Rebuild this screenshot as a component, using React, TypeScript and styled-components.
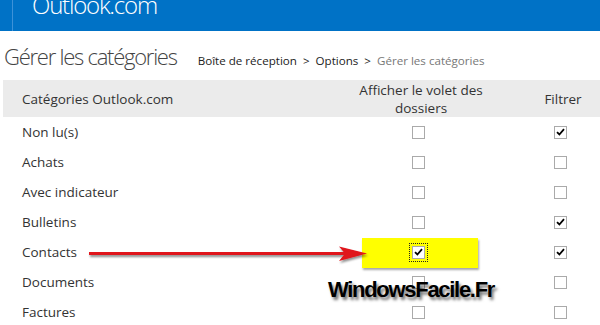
import React from "react"
import styled, { createGlobalStyle } from "styled-components"

const GlobalStyle = createGlobalStyle`
  html, body {
    margin:0;
    padding:0;
    background:#fff;
    overflow:hidden;
  }
  body {
    font-family: "Segoe UI", "Open Sans", "Noto Sans", sans-serif;
    color:#333;
  }
`

const Page = styled.div`
  position:relative;
  width:600px;
  height:325px;
  overflow:hidden;
`

const TopBar = styled.div`
  height:31px;
  background:#0072c6;
  display:flex;
  padding-left:12px;
  overflow:hidden;
`

const Divider = styled.div`
  width:1px;
  background:#3d92d8;
`

const Brand = styled.div`
  margin-left:19px;
  margin-top:-7px;
  font-size:24px;
  line-height:24px;
  font-weight:300;
  letter-spacing:-1.2px;
  color:#fff;
`

const TitleRow = styled.div`
  height:49px;
  display:flex;
  align-items:baseline;
  padding:0 4px;
`

const Title = styled.h1`
  margin:0;
  margin-top:10px;
  font-size:22px;
  line-height:30px;
  font-weight:300;
  letter-spacing:-1.25px;
  color:#444;
`

const Crumbs = styled.div`
  margin-left:21px;
  font-size:11.6px;
  color:#222;
  display:flex;
  gap:6px;
  white-space:nowrap;
`

const Crumb = styled.span<{ $current?: boolean }>`
  color:${({ $current }) => ($current ? "#777" : "#222")};
`

const Table = styled.div`
  margin-left:3px;
  width:642px;
`

const Row = styled.div`
  display:grid;
  grid-template-columns: 358px 120px 164px;
  align-items:center;
  height:30px;
  font-size:13.5px;
  color:#333;
`

const HeadRow = styled(Row)`
  height:37px;
  background-color:#ebebeb;
`

const NameCell = styled.div`
  padding-left:19px;
  white-space:nowrap;
`

const CenterCell = styled.div`
  display:flex;
  justify-content:center;
  text-align:center;
  line-height:18px;
  white-space:nowrap;
`

const Box = styled.span<{ $focus?: boolean }>`
  width:13px;
  height:13px;
  box-sizing:border-box;
  border:1px solid #aaa;
  background:#fff;
  display:flex;
  align-items:center;
  justify-content:center;
  margin-left:-5px;
  ${({ $focus }) => $focus && `
    outline:1px dotted #222;
    outline-offset:2px;
    position:relative;
    z-index:3;
  `}
`

const Highlight = styled.div`
  position:absolute;
  left:362px;
  top:238px;
  width:116px;
  height:30px;
  background:#ffff00;
  box-shadow:1px 2px 2px rgba(0,0,0,0.35);
  z-index:2;
`

const Arrow = styled.svg`
  position:absolute;
  left:86px;
  top:244px;
  z-index:4;
  overflow:visible;
`

const Watermark = styled.div`
  position:absolute;
  left:328px;
  top:277px;
  font-family:"Liberation Sans", Arial, sans-serif;
  font-weight:700;
  font-size:22px;
  letter-spacing:-1.3px;
  color:#000;
  text-shadow:2px 3px 3px rgba(0,0,0,0.55);
  z-index:5;
`

const Check = () => (
  <svg width="9" height="8" viewBox="0 0 9 8">
    <path d="M1 4.2 L3.4 6.5 L8 1.2" fill="none" stroke="#000" strokeWidth="1.8" />
  </svg>
)

type Category = { name: string, folder: boolean, filter: boolean }

const categories: Category[] = [
  { name: "Non lu(s)", folder: false, filter: true },
  { name: "Achats", folder: false, filter: false },
  { name: "Avec indicateur", folder: false, filter: false },
  { name: "Bulletins", folder: false, filter: true },
  { name: "Contacts", folder: true, filter: true },
  { name: "Documents", folder: false, filter: false },
  { name: "Factures", folder: false, filter: false },
]

export default function App() {
  return (
    <Page>
      <GlobalStyle />
      <TopBar>
        <Divider />
        <Brand>Outlook.com</Brand>
      </TopBar>
      <TitleRow>
        <Title>Gérer les catégories</Title>
        <Crumbs>
          <Crumb>Boîte de réception</Crumb>
          <Crumb>&gt;</Crumb>
          <Crumb>Options</Crumb>
          <Crumb>&gt;</Crumb>
          <Crumb $current>Gérer les catégories</Crumb>
        </Crumbs>
      </TitleRow>
      <Table>
        <HeadRow>
          <NameCell>Catégories Outlook.com</NameCell>
          <CenterCell>Afficher le volet des<br />dossiers</CenterCell>
          <CenterCell>Filtrer</CenterCell>
        </HeadRow>
        {categories.map((c) => (
          <Row key={c.name}>
            <NameCell>{c.name}</NameCell>
            <CenterCell>
              <Box $focus={c.name === "Contacts"}>{c.folder && <Check />}</Box>
            </CenterCell>
            <CenterCell>
              <Box>{c.filter && <Check />}</Box>
            </CenterCell>
          </Row>
        ))}
      </Table>
      <Highlight />
      <Arrow width="284" height="20" viewBox="0 0 284 20">
        <defs>
          <filter id="sh" x="-5%" y="-50%" width="110%" height="200%">
            <feDropShadow dx="1" dy="2" stdDeviation="1.2" floodColor="#000" floodOpacity="0.45" />
          </filter>
        </defs>
        <g filter="url(#sh)">
          <path d="M3 8 L262 8 L262 11 L3 11 Z" fill="#e0141b" />
          <path d="M253 2.5 L281 9.5 L253 17 L259 9.5 Z" fill="#e0141b" />
        </g>
      </Arrow>
      <Watermark>WindowsFacile.Fr</Watermark>
    </Page>
  )
}
